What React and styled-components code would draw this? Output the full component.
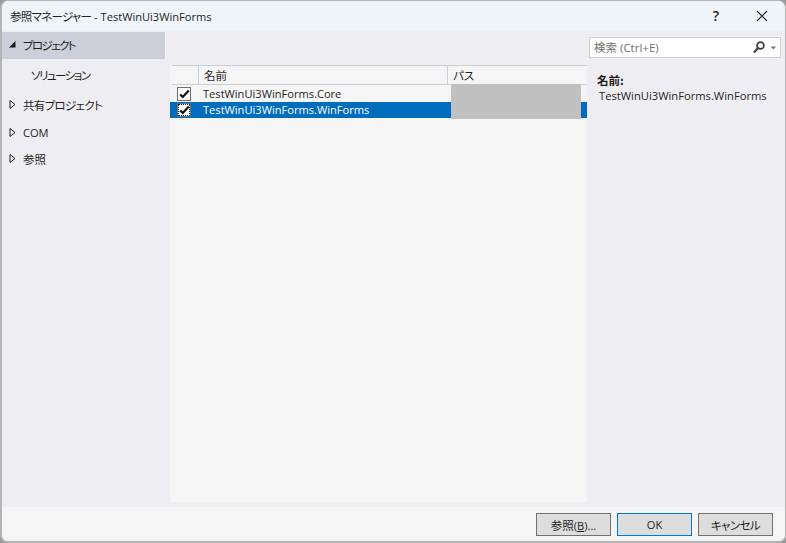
import React from "react";
import styled, { createGlobalStyle } from "styled-components";

const GlobalStyle = createGlobalStyle`
  html, body { margin: 0; padding: 0; background: #9a9a9a; }
  body { width: 786px; height: 543px; overflow: hidden; }
`;

const Window = styled.div`
  width: 786px;
  height: 543px;
  box-sizing: border-box;
  display: flex;
  flex-direction: column;
  background: #eeeef2;
  border: 1px solid #b4b4b4;
  border-width: 1px 1px 2px 2px;
  border-radius: 8px;
  overflow: hidden;
  color: #1e1e1e;
  font-family: "Open Sans", "Noto Sans CJK JP", sans-serif;
  font-size: 11.1px;
`;

// Japanese runs: proportional kana, a touch larger than the latin text
const Ja = styled.span`
  font-family: "Noto Sans CJK JP", sans-serif;
  font-size: 11.5px;
  font-feature-settings: "palt";
  letter-spacing: ${(p) => p.$track || 0}px;
`;

const TitleBar = styled.div`
  height: 30px;
  box-sizing: border-box;
  flex: none;
  display: flex;
  align-items: center;
  padding: 0 0 1px 8px;
  background: #eff4f9;
`;

const Title = styled.div`
  flex: 1;
`;

const TitleButton = styled.div`
  width: 46px;
  display: flex;
  justify-content: center;
  align-items: center;
  font-size: 14px;
  font-weight: 600;
`;

const Body = styled.div`
  flex: 1;
  min-height: 0;
  display: flex;
`;

const Sidebar = styled.div`
  width: 163px;
  flex: none;
  display: flex;
  flex-direction: column;
  margin-top: 1px;
`;

const TreeRow = styled.div`
  height: ${(p) => p.$h || 27}px;
  box-sizing: border-box;
  display: flex;
  align-items: center;
  padding: 0 0 ${(p) => (p.$latin ? 0 : 2)}px ${(p) => (p.$child ? 29 : 6)}px;
  background: ${(p) => (p.$active ? "#ccced9" : "transparent")};
`;

const Arrow = styled.svg`
  width: 9px;
  height: 9px;
  margin-right: 6px;
  flex: none;
`;

const Center = styled.div`
  width: 417px;
  flex: none;
  margin: 34px 0 5px 5px;
  background: #f5f5f5;
  display: flex;
  flex-direction: column;
  position: relative;
`;

const HeaderRow = styled.div`
  height: 20px;
  flex: none;
  display: flex;
  margin-left: 2px;
  background: #f5f5f5;
  border-top: 1px solid #ccced9;
  border-bottom: 1px solid #ccced9;
  box-sizing: border-box;
`;

const HeaderCell = styled.div`
  width: ${(p) => p.$w}px;
  flex: ${(p) => (p.$grow ? 1 : "none")};
  box-sizing: border-box;
  padding-left: 5px;
  display: flex;
  align-items: center;
  border-right: ${(p) => (p.$grow ? "none" : "1px solid #ccced9")};
`;

const ListRow = styled.div`
  height: ${(p) => p.$h}px;
  display: flex;
  align-items: center;
  background: ${(p) => (p.$selected ? "#006cbe" : "transparent")};
  color: ${(p) => (p.$selected ? "#ffffff" : "#1e1e1e")};
`;

const RowText = styled.span`
  margin-bottom: ${(p) => (p.$selected ? 2 : 0)}px;
`;

const CheckBox = styled.div`
  width: 14px;
  height: 14px;
  box-sizing: border-box;
  margin: 0 12px 0 7px;
  border: 1px solid #707070;
  background: #ffffff;
  display: flex;
  align-items: center;
  justify-content: center;
  flex: none;
  position: relative;
`;

const FocusDots = styled.div`
  position: absolute;
  inset: 0;
  border: 1px dotted #1e1e1e;
`;

const Redacted = styled.div`
  position: absolute;
  left: 281px;
  top: 19px;
  width: 130px;
  height: 35px;
  background: #c0c0c0;
`;

const Details = styled.div`
  flex: 1;
  min-width: 0;
  padding: 6px 4px 0 2px;
`;

const SearchBox = styled.div`
  height: 21px;
  box-sizing: border-box;
  display: flex;
  align-items: center;
  background: #ffffff;
  border: 1px solid #ccced9;
  padding: 0 3px 0 4px;
  color: #717171;
`;

const SearchText = styled.div`
  flex: 1;
  font-size: 11.5px;
  padding-bottom: 2px;
`;

const DetailLabel = styled.div`
  margin: 15px 0 0 8px;
  font-weight: 700;
  line-height: 15px;
`;

const DetailValue = styled.div`
  margin-left: 10px;
  line-height: 15px;
  font-size: 11.2px;
  white-space: nowrap;
`;

const Footer = styled.div`
  height: 34px;
  box-sizing: border-box;
  flex: none;
  display: flex;
  justify-content: flex-end;
  align-items: flex-start;
  gap: 6px;
  padding: 6px 12px 0 0;
  background: #f5f5f5;
`;

const Button = styled.div`
  width: 75px;
  height: 23px;
  box-sizing: border-box;
  display: flex;
  align-items: center;
  justify-content: center;
  background: #dddddd;
  border: 1px solid ${(p) => (p.$default ? "#0078d4" : "#707070")};
`;

const Underline = styled.span`
  text-decoration: underline;
`;

const TreeArrow = ({ open }) => (
  <Arrow viewBox="0 0 9 9">
    {open ? (
      <path d="M1 7.5 L7.5 7.5 L7.5 1 Z" fill="#1e1e1e" />
    ) : (
      <path d="M2 0.5 L7 4.5 L2 8.5 Z" fill="none" stroke="#1e1e1e" strokeWidth="1" />
    )}
  </Arrow>
);

const Tick = () => (
  <svg width="12" height="12" viewBox="0 0 12 12">
    <path d="M2.2 6.5 L4.8 9 L10.8 2.5" fill="none" stroke="#111111" strokeWidth="2.2" />
  </svg>
);

export default function App() {
  return (
    <>
      <GlobalStyle />
      <Window>
        <TitleBar>
          <Title>
            <Ja $track={-0.7}>参照マネージャー</Ja> - TestWinUi3WinForms
          </Title>
          <TitleButton>?</TitleButton>
          <TitleButton>
            <svg width="12" height="12" viewBox="0 0 12 12">
              <path d="M1 1 L11 11 M11 1 L1 11" stroke="#1e1e1e" strokeWidth="1.1" />
            </svg>
          </TitleButton>
        </TitleBar>
        <Body>
          <Sidebar>
            <TreeRow $active>
              <TreeArrow open />
              <Ja $track={-1.6}>プロジェクト</Ja>
            </TreeRow>
            <TreeRow $child $h={33}>
              <Ja $track={-1.5}>ソリューション</Ja>
            </TreeRow>
            <TreeRow>
              <TreeArrow />
              <Ja $track={-0.7}>共有プロジェクト</Ja>
            </TreeRow>
            <TreeRow $latin>
              <TreeArrow />
              COM
            </TreeRow>
            <TreeRow>
              <TreeArrow />
              <Ja>参照</Ja>
            </TreeRow>
          </Sidebar>
          <Center>
            <HeaderRow>
              <HeaderCell $w={27} />
              <HeaderCell $w={249}>
                <Ja>名前</Ja>
              </HeaderCell>
              <HeaderCell $grow>
                <Ja>パス</Ja>
              </HeaderCell>
            </HeaderRow>
            <ListRow $h={17}>
              <CheckBox>
                <Tick />
              </CheckBox>
              <RowText>TestWinUi3WinForms.Core</RowText>
            </ListRow>
            <ListRow $h={16} $selected>
              <CheckBox>
                <Tick />
                <FocusDots />
              </CheckBox>
              <RowText $selected>TestWinUi3WinForms.WinForms</RowText>
            </ListRow>
            <Redacted />
          </Center>
          <Details>
            <SearchBox>
              <SearchText>
                <Ja>検索</Ja> (Ctrl+E)
              </SearchText>
              <svg width="24" height="14" viewBox="0 0 24 14">
                <circle cx="7.5" cy="4.5" r="3.4" fill="none" stroke="#424242" strokeWidth="1.8" />
                <path d="M5 7 L1 11.5" stroke="#424242" strokeWidth="2.2" />
                <path d="M17.7 5.5 L23 5.5 L20.35 8.5 Z" fill="#717171" />
              </svg>
            </SearchBox>
            <DetailLabel>
              <Ja>名前:</Ja>
            </DetailLabel>
            <DetailValue>TestWinUi3WinForms.WinForms</DetailValue>
          </Details>
        </Body>
        <Footer>
          <Button>
            <span>
              <Ja>参照</Ja>(<Underline>B</Underline>)...
            </span>
          </Button>
          <Button $default>OK</Button>
          <Button>
            <Ja $track={-0.6}>キャンセル</Ja>
          </Button>
        </Footer>
      </Window>
    </>
  );
}
